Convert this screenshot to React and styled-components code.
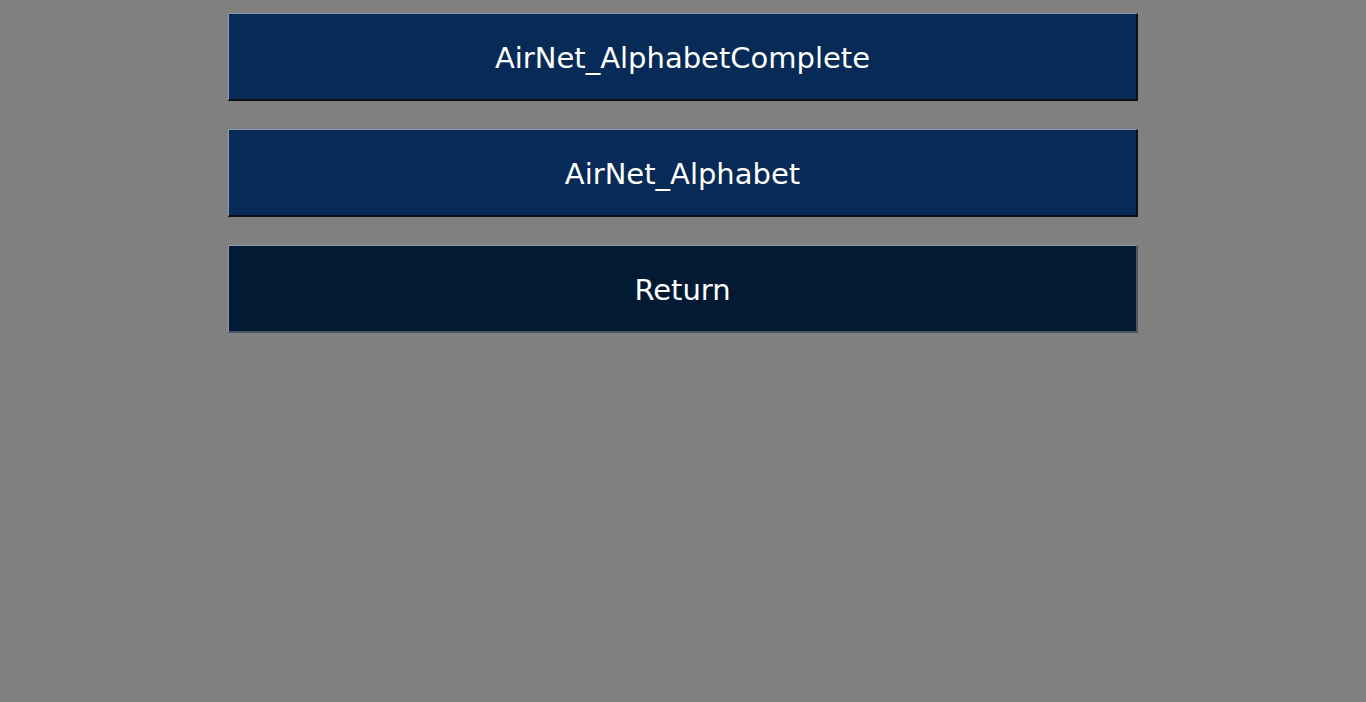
import React from 'react';
import styled, { createGlobalStyle } from 'styled-components';

const GlobalStyle = createGlobalStyle`
  html, body {
    margin: 0;
    padding: 0;
    background: #808080;
    font-family: "DejaVu Sans", Verdana, sans-serif;
  }
`;

const Page = styled.div`
  display: flex;
  flex-direction: column;
  align-items: center;
  gap: 28px;
  padding-top: 13px;
  min-height: 702px;
  box-sizing: border-box;
`;

const MenuButton = styled.button`
  width: 910px;
  height: 88px;
  box-sizing: border-box;
  background: ${p => (p.$dark ? '#021a33' : '#072b56')};
  color: #ffffff;
  font-family: "DejaVu Sans", Verdana, sans-serif;
  font-size: 29px;
  border-style: solid;
  border-width: 1px 2px 2px 1px;
  border-color: ${p =>
    p.$dark
      ? '#8a9bb0 #4a5566 #4a5566 #8a9bb0'
      : '#8a9bb0 #0a0f18 #0a0f18 #8a9bb0'};
  cursor: pointer;
  padding: 3px 0 0;
`;

export default function App() {
  return (
    <>
      <GlobalStyle />
      <Page>
        <MenuButton>AirNet_AlphabetComplete</MenuButton>
        <MenuButton>AirNet_Alphabet</MenuButton>
        <MenuButton $dark>Return</MenuButton>
      </Page>
    </>
  );
}
